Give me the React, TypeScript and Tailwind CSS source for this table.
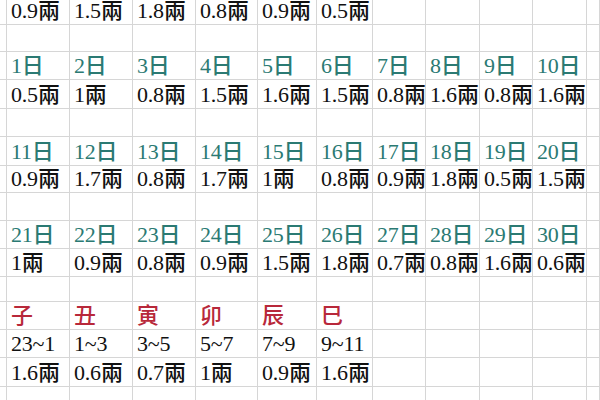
const amounts1 = ['0.9兩', '1.5兩', '1.8兩', '0.8兩', '0.9兩', '0.5兩'];

const days = (start: number) => Array.from({ length: 10 }, (_, i) => `${start + i}日`);

const rows: { cells: string[]; tone: 'black' | 'green' | 'red' }[] = [
  { cells: amounts1, tone: 'black' },
  { cells: [], tone: 'black' },
  { cells: days(1), tone: 'green' },
  { cells: ['0.5兩', '1兩', '0.8兩', '1.5兩', '1.6兩', '1.5兩', '0.8兩', '1.6兩', '0.8兩', '1.6兩'], tone: 'black' },
  { cells: [], tone: 'black' },
  { cells: days(11), tone: 'green' },
  { cells: ['0.9兩', '1.7兩', '0.8兩', '1.7兩', '1兩', '0.8兩', '0.9兩', '1.8兩', '0.5兩', '1.5兩'], tone: 'black' },
  { cells: [], tone: 'black' },
  { cells: days(21), tone: 'green' },
  { cells: ['1兩', '0.9兩', '0.8兩', '0.9兩', '1.5兩', '1.8兩', '0.7兩', '0.8兩', '1.6兩', '0.6兩'], tone: 'black' },
  { cells: [], tone: 'black' },
  { cells: ['子', '丑', '寅', '卯', '辰', '巳'], tone: 'red' },
  { cells: ['23~1', '1~3', '3~5', '5~7', '7~9', '9~11'], tone: 'black' },
  { cells: ['1.6兩', '0.6兩', '0.7兩', '1兩', '0.9兩', '1.6兩'], tone: 'black' },
  { cells: [], tone: 'black' },
];

const toneClass = {
  black: 'text-[#111111]',
  green: 'text-[#2b7a73]',
  red: 'text-[#b8283a]',
};

export default function App() {
  return (
    <div className="w-[600px] h-[400px] overflow-hidden bg-white font-['Liberation_Serif','Noto_Sans_CJK_TC',serif] text-[22px] font-medium leading-none">
      <div className="grid grid-cols-[7px_63px_63px_63px_62px_59px_56px_53px_54px_53px_54px_1fr] grid-rows-[25px_27px_28px_29px_28px_29px_27px_28px_28px_28px_25px_28px_28px_29px_28px]">
        {rows.map((row, r) => (
          <div key={r} className="contents">
            <div className="border-r border-b border-[#d6d6d6]" />
            {Array.from({ length: 11 }, (_, c) => (
              <div
                key={c}
                className={`flex items-end pb-[2px] pl-[4px] whitespace-nowrap tracking-[-0.2px] border-r border-b border-[#d6d6d6] ${toneClass[row.tone]}`}
              >
                {row.cells[c] ?? ''}
              </div>
            ))}
          </div>
        ))}
      </div>
    </div>
  );
}
